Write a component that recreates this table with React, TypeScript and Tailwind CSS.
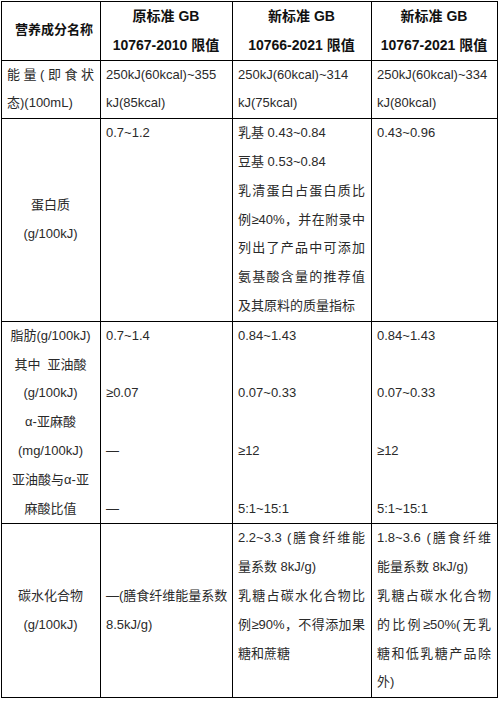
import React from "react";

const base =
  "border-r border-b border-black pl-[5px] pr-[6px] text-[13px] leading-[28.8px] text-[#2a2a2a]";
const J = "text-justify [text-align-last:justify] whitespace-nowrap";

function L({ children, j }: { children?: React.ReactNode; j?: boolean }) {
  return <div className={j ? J : "whitespace-nowrap"}>{children ?? "\u00a0"}</div>;
}

export default function App() {
  return (
    <div className="bg-white w-[502px] h-[705px] pt-[1px] pl-[1px]" style={{ fontFamily: '"Liberation Sans", "Noto Sans CJK SC", sans-serif' }}>
      <div className="grid grid-cols-[99px_132px_139px_126px] border-l border-t border-black w-[497px]">
        {/* header */}
        <div className={`${base} flex flex-col justify-center items-center pl-[12px] pr-0 font-bold text-[13.5px] text-[#111]`}>
          <div>营养成分名称</div>
        </div>
        <div className={`${base} text-center font-bold text-[14px] text-[#111]`}>
          <div>原标准 GB</div>
          <div>10767-2010 限值</div>
        </div>
        <div className={`${base} text-center font-bold text-[14px] text-[#111]`}>
          <div>新标准 GB</div>
          <div>10766-2021 限值</div>
        </div>
        <div className={`${base} text-center font-bold text-[14px] text-[#111]`}>
          <div>新标准 GB</div>
          <div>10767-2021 限值</div>
        </div>

        {/* energy */}
        <div className={base}>
          <L j>能量(即食状</L>
          <L>态)(100mL)</L>
        </div>
        <div className={base}>
          <L>250kJ(60kcal)~355</L>
          <L>kJ(85kcal)</L>
        </div>
        <div className={base}>
          <L>250kJ(60kcal)~314</L>
          <L>kJ(75kcal)</L>
        </div>
        <div className={base}>
          <L>250kJ(60kcal)~334</L>
          <L>kJ(80kcal)</L>
        </div>

        {/* protein */}
        <div className={`${base} flex flex-col justify-center items-center`}>
          <div>蛋白质</div>
          <div>(g/100kJ)</div>
        </div>
        <div className={base}>
          <L>0.7~1.2</L>
        </div>
        <div className={base}>
          <L>乳基 0.43~0.84</L>
          <L>豆基 0.53~0.84</L>
          <L j>乳清蛋白占蛋白质比</L>
          <L j>例≥40%，并在附录中</L>
          <L j>列出了产品中可添加</L>
          <L j>氨基酸含量的推荐值</L>
          <L>及其原料的质量指标</L>
        </div>
        <div className={base}>
          <L>0.43~0.96</L>
        </div>

        {/* fat */}
        <div className={`${base} text-center pl-[2px] pr-[2px]`}>
          <div>脂肪(g/100kJ)</div>
          <div className="whitespace-pre">其中  亚油酸</div>
          <div>(g/100kJ)</div>
          <div>α-亚麻酸</div>
          <div>(mg/100kJ)</div>
          <div>亚油酸与α-亚</div>
          <div>麻酸比值</div>
        </div>
        <div className={base}>
          <L>0.7~1.4</L>
          <L />
          <L>≥0.07</L>
          <L />
          <L>—</L>
          <L />
          <L>—</L>
        </div>
        <div className={base}>
          <L>0.84~1.43</L>
          <L />
          <L>0.07~0.33</L>
          <L />
          <L>≥12</L>
          <L />
          <L>5:1~15:1</L>
        </div>
        <div className={base}>
          <L>0.84~1.43</L>
          <L />
          <L>0.07~0.33</L>
          <L />
          <L>≥12</L>
          <L />
          <L>5:1~15:1</L>
        </div>

        {/* carbohydrate */}
        <div className={`${base} flex flex-col justify-center items-center`}>
          <div>碳水化合物</div>
          <div>(g/100kJ)</div>
        </div>
        <div className={`${base} flex flex-col justify-center`}>
          <L>—(膳食纤维能量系数</L>
          <L>8.5kJ/g)</L>
        </div>
        <div className={base}>
          <L j>2.2~3.3 (膳食纤维能</L>
          <L>量系数 8kJ/g)</L>
          <L j>乳糖占碳水化合物比</L>
          <L j>例≥90%，不得添加果</L>
          <L>糖和蔗糖</L>
        </div>
        <div className={base}>
          <L j>1.8~3.6 (膳食纤维</L>
          <L>能量系数 8kJ/g)</L>
          <L j>乳糖占碳水化合物</L>
          <L j>的比例≥50%(无乳</L>
          <L j>糖和低乳糖产品除</L>
          <L>外)</L>
        </div>
      </div>
    </div>
  );
}
